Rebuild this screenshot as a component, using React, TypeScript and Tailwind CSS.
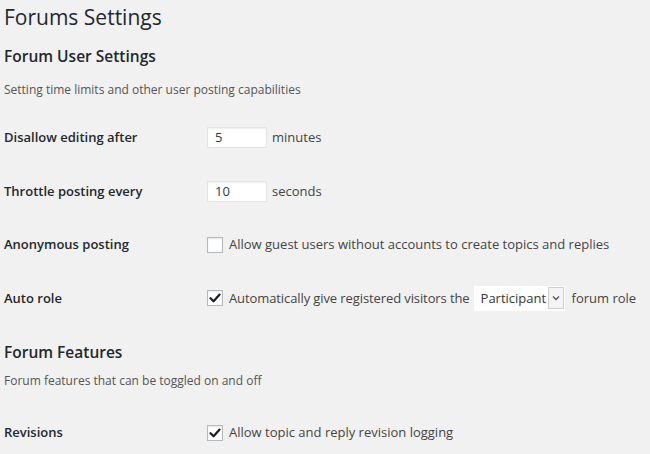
import React from "react";

function Check({ checked }: { checked: boolean }) {
  return (
    <span className="flex h-[16px] w-[16px] shrink-0 items-center justify-center border border-[#b4b9be] bg-white shadow-[inset_0_1px_2px_rgba(0,0,0,0.1)]">
      {checked && (
        <svg width="12" height="12" viewBox="0 0 12 12">
          <path d="M1.5 6.2 L4.6 9.3 L10.6 2.6" fill="none" stroke="#1e1e1e" strokeWidth="2.2" strokeLinecap="round" strokeLinejoin="round" />
        </svg>
      )}
    </span>
  );
}

function Row({ label, children }: { label: string; children: React.ReactNode }) {
  return (
    <div className="flex h-[53.5px] items-center whitespace-nowrap">
      <div className="w-[203px] shrink-0 text-[13px] font-semibold text-[#23282d]">{label}</div>
      <div className="flex items-center text-[13px] text-[#444]">{children}</div>
    </div>
  );
}

function NumInput({ value }: { value: string }) {
  return (
    <span className="flex h-[21px] w-[60px] items-center border border-[#e4e4e4] bg-white pl-[7px] text-[13px] text-[#32373c] shadow-[inset_0_1px_2px_rgba(0,0,0,0.07)]">
      {value}
    </span>
  );
}

export default function App() {
  return (
    <div className="min-h-screen bg-[#f1f1f1] pl-[4px] pt-[3px] font-['Open_Sans',sans-serif] text-[#23282d]">
      <h1 className="text-[21px] leading-[28px] font-normal">Forums Settings</h1>
      <h2 className="mt-[13px] text-[15.5px] font-semibold leading-[24px]">Forum User Settings</h2>
      <p className="mt-[12px] text-[12px] leading-[20px] text-[#555]">Setting time limits and other user posting capabilities</p>
      <div className="mt-[11px]">
        <Row label="Disallow editing after">
          <NumInput value="5" />
          <span className="ml-[5px]">minutes</span>
        </Row>
        <Row label="Throttle posting every">
          <NumInput value="10" />
          <span className="ml-[5px]">seconds</span>
        </Row>
        <Row label="Anonymous posting">
          <Check checked={false} />
          <span className="ml-[6px]">Allow guest users without accounts to create topics and replies</span>
        </Row>
        <Row label="Auto role">
          <Check checked={true} />
          <span className="ml-[6px] tracking-[-0.1px]">Automatically give registered visitors the</span>
          <span className="ml-[4px] flex h-[25px] w-[91px] items-center justify-between bg-white pl-[7px] pr-[1px] text-[#32373c]">
            <span>Participant</span>
            <span className="flex h-[22px] w-[16px] items-center justify-center border border-[#cfcfcf] bg-[#f4f4f4]">
              <svg width="8" height="6" viewBox="0 0 8 6">
                <path d="M1 1.5 L4 4.5 L7 1.5" fill="none" stroke="#555" strokeWidth="1.3" />
              </svg>
            </span>
          </span>
          <span className="ml-[7px]">forum role</span>
        </Row>
      </div>
      <h2 className="mt-[15px] text-[15.5px] font-semibold leading-[24px]">Forum Features</h2>
      <p className="mt-[7px] text-[12px] leading-[20px] text-[#555]">Forum features that can be toggled on and off</p>
      <div className="mt-[15px]">
        <Row label="Revisions">
          <Check checked={true} />
          <span className="ml-[6px]">Allow topic and reply revision logging</span>
        </Row>
      </div>
    </div>
  );
}
